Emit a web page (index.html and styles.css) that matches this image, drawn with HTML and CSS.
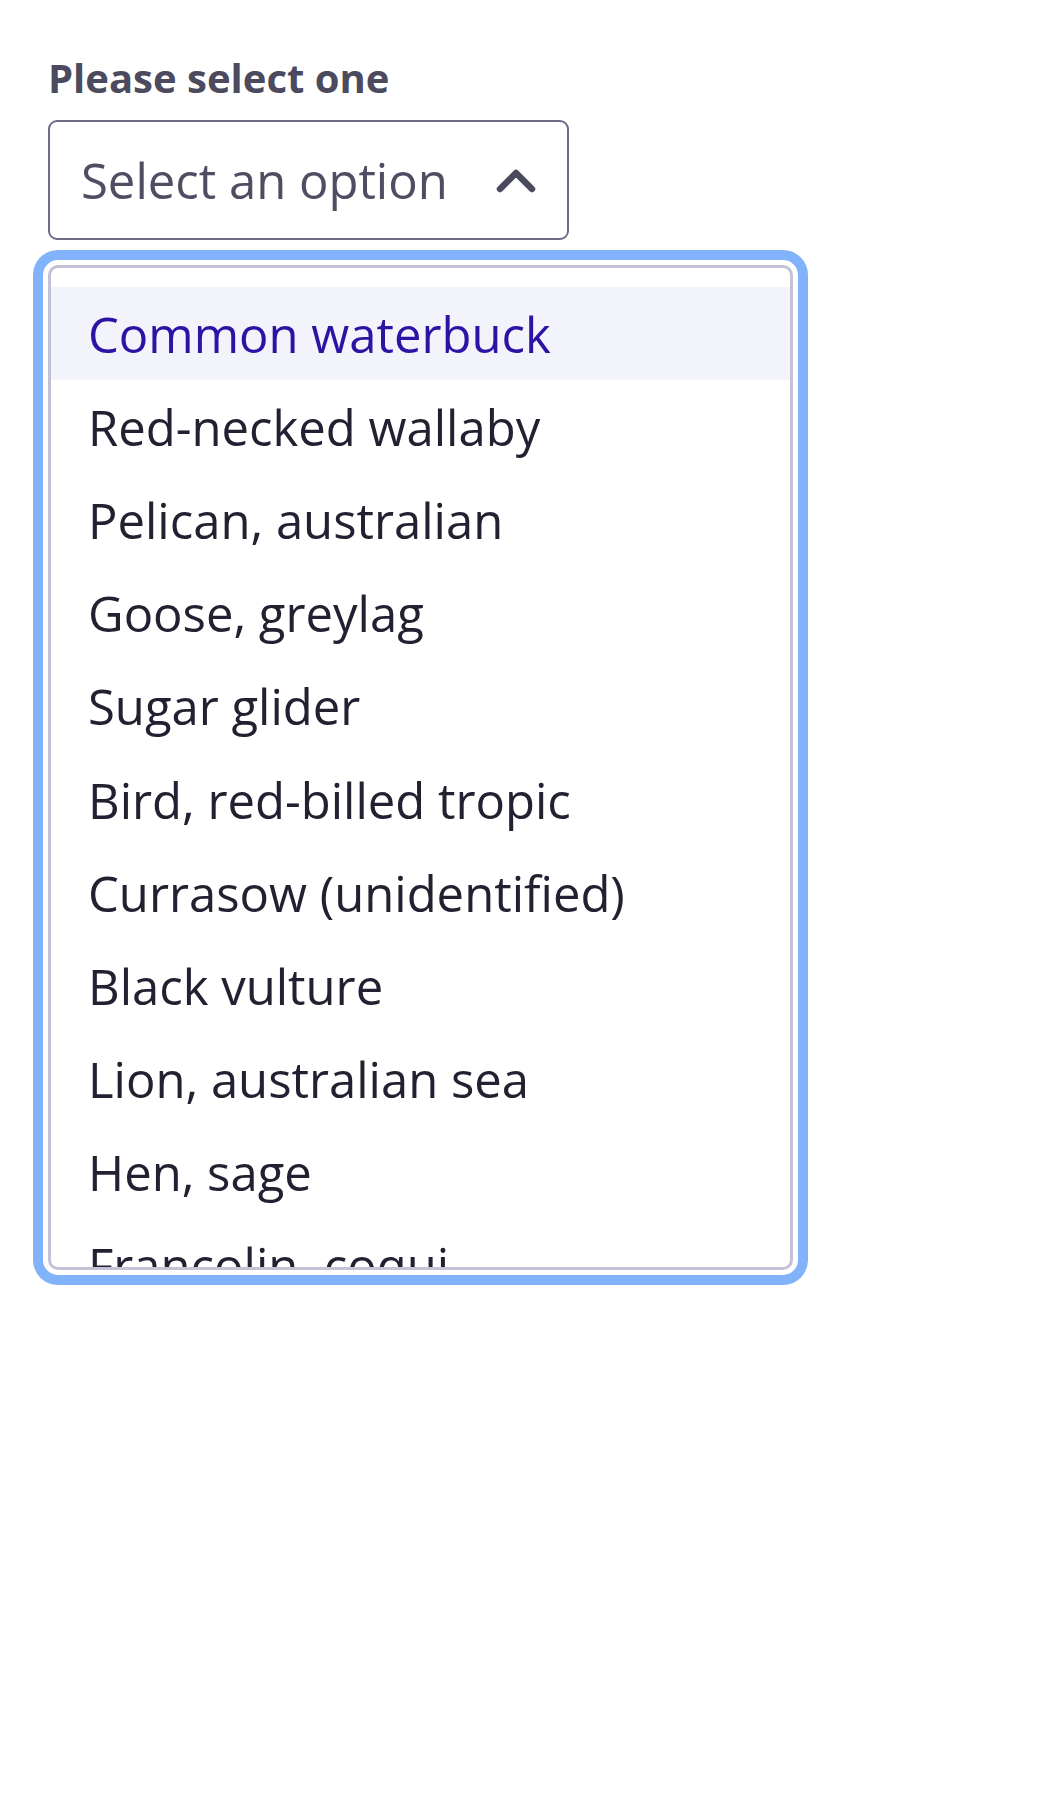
FILE: index.html
```html
<!DOCTYPE html>
<html lang="en">
<head>
<meta charset="utf-8">
<title>Select</title>
<link rel="stylesheet" href="styles.css">
</head>
<body>
<div class="field">
  <label class="label" id="lbl">Please select one</label>
  <button class="select" aria-labelledby="lbl" aria-expanded="true">
    <span class="select-text">Select an option</span>
    <svg class="chevron" width="40" height="26" viewBox="0 0 40 26" aria-hidden="true">
      <path d="M4 22 L20 6 L36 22" fill="none" stroke="currentColor" stroke-width="6.5" stroke-linecap="round" stroke-linejoin="round"/>
    </svg>
  </button>
  <ul class="listbox" role="listbox">
    <li class="option active" role="option">Common waterbuck</li>
    <li class="option" role="option">Red-necked wallaby</li>
    <li class="option" role="option">Pelican, australian</li>
    <li class="option" role="option">Goose, greylag</li>
    <li class="option" role="option">Sugar glider</li>
    <li class="option" role="option">Bird, red-billed tropic</li>
    <li class="option" role="option">Currasow (unidentified)</li>
    <li class="option" role="option">Black vulture</li>
    <li class="option" role="option">Lion, australian sea</li>
    <li class="option" role="option">Hen, sage</li>
    <li class="option" role="option">Francolin, coqui</li>
  </ul>
</div>
</body>
</html>
```
FILE: styles.css
```css
html, body {
  margin: 0;
  padding: 0;
  background: #ffffff;
}

body {
  font-family: "Open Sans", "Noto Sans", sans-serif;
  min-height: 1800px;
}

.field {
  display: flex;
  flex-direction: column;
  align-items: flex-start;
  padding: 49px 0 60px 48px;
}

.label {
  font-size: 40px;
  font-weight: 700;
  line-height: 58px;
  color: #4b4a5e;
  margin-bottom: 13px;
}

.select {
  box-sizing: border-box;
  width: 521px;
  height: 120px;
  display: flex;
  align-items: center;
  justify-content: space-between;
  padding: 0 31px 0 31px;
  border: 2px solid #6e6d89;
  border-radius: 9px;
  background: #ffffff;
  font-family: inherit;
  cursor: pointer;
}

.select-text {
  font-size: 49px;
  line-height: 60px;
  color: #4e4d62;
}

.chevron {
  color: #4a4a5e;
  display: block;
}

.listbox {
  box-sizing: border-box;
  list-style: none;
  margin: 25px 0 0 0;
  padding: 19px 0 0 0;
  width: 745px;
  height: 1005px;
  overflow: hidden;
  border: 3px solid #c3c2d6;
  border-radius: 10px;
  outline: 10px solid #80b3f9;
  outline-offset: 5px;
  background: #ffffff;
}

.option {
  height: 93.2px;
  display: flex;
  align-items: center;
  padding-left: 37px;
  font-size: 49px;
  color: #222131;
  white-space: nowrap;
}

.option.active {
  background: #f3f3fc;
  color: #2b14a3;
}
```
